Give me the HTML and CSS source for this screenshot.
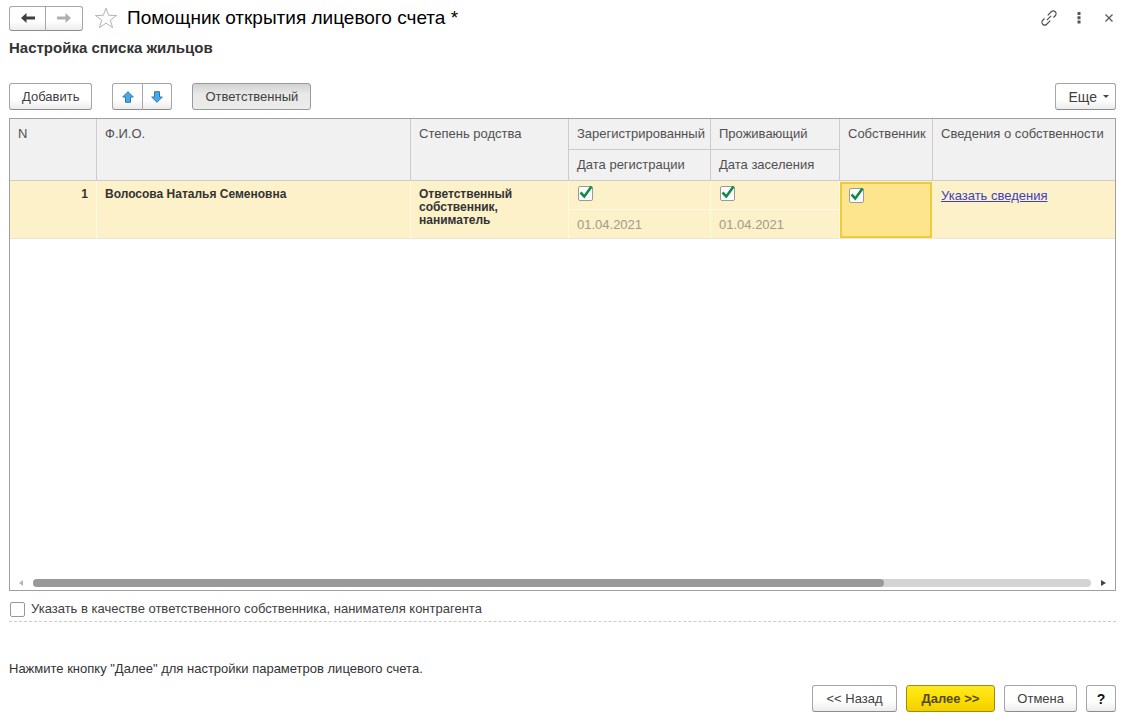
FILE: index.html
```html
<!DOCTYPE html>
<html lang="ru">
<head>
<meta charset="utf-8">
<meta name="viewport" content="width=device-width, initial-scale=1">
<title>Помощник открытия лицевого счета</title>
<link rel="stylesheet" href="styles.css">
</head>
<body>
<svg class="sprite" aria-hidden="true">
  <symbol id="tick" viewBox="0 0 17 17"><path d="M3.500 7.500 7.300 11.500 14.500 1.500" fill="none" stroke="#128a4c" stroke-width="2.600"/></symbol>
</svg>
<main class="window">
  <header class="titlebar">
    <div class="group">
      <button class="btn nav" type="button" aria-label="Назад по истории">
        <svg width="14" height="10" viewBox="0 0 14 10"><path d="M5.500 0 0 5l5.500 5V6.500H14v-3H5.500z" fill="#404040"/></svg>
      </button>
      <button class="btn nav" type="button" aria-label="Вперед по истории">
        <svg width="14" height="10" viewBox="0 0 14 10"><path d="M8.500 0 14 5l-5.500 5V6.500H0v-3h8.500z" fill="#b0b0b0"/></svg>
      </button>
    </div>
    <button class="icon star" type="button" aria-label="Добавить в избранное">
      <svg width="24" height="22" viewBox="0 0 24 22"><path d="M12 1.200 14.700 8.300 22.600 8.500 16.300 13.100 18.600 20.600 12 16.200 5.400 20.600 7.700 13.100 1.400 8.500 9.300 8.300z" fill="#fff" stroke="#b4b4b4"/></svg>
    </button>
    <h1 class="title">Помощник открытия лицевого счета *</h1>
    <div class="tools">
      <button class="icon" type="button" aria-label="Получить ссылку">
        <svg width="18" height="18" viewBox="-9 -9 18 18" fill="none" stroke="#505050" stroke-width="1.200"><path transform="rotate(-45)" d="M1-2.800H6a2.800 2.800 0 0 1 0 5.600H3.500M-1 2.800H-6a2.800 2.800 0 0 1 0-5.600H-3.500M-3 0H3"/></svg>
      </button>
      <button class="icon" type="button" aria-label="Меню">
        <svg width="4" height="12" viewBox="0 0 4 12" fill="#555"><path d="M.5 0h3v3h-3zM.5 4.200h3v3h-3zM.5 8.400h3v3h-3z"/></svg>
      </button>
      <button class="icon" type="button" aria-label="Закрыть">
        <svg width="8" height="8" viewBox="0 0 8 8"><path d="M.5.500l7 7M7.500.500l-7 7" stroke="#555" stroke-width="1.200"/></svg>
      </button>
    </div>
  </header>
  <h2 class="subtitle">Настройка списка жильцов</h2>

  <div class="toolbar">
    <button class="btn" type="button">Добавить</button>
    <div class="group">
      <button class="btn move" type="button" aria-label="Переместить вверх">
        <svg width="12" height="12" viewBox="0 0 12 12"><path d="M6 .7 11.300 6H8.500v5.300h-5V6H.7z" fill="#4aa8e8" stroke="#2878b0"/></svg>
      </button>
      <button class="btn move" type="button" aria-label="Переместить вниз">
        <svg width="12" height="12" viewBox="0 0 12 12"><path d="M6 11.300.7 6h2.800V.7h5V6h2.800z" fill="#4aa8e8" stroke="#2878b0"/></svg>
      </button>
    </div>
    <button class="btn pressed" type="button" aria-pressed="true">Ответственный</button>
    <button class="btn more" type="button">Еще
      <svg width="6" height="3" viewBox="0 0 6 3"><path d="M0 0h6L3 3z" fill="#444"/></svg>
    </button>
  </div>

  <section class="frame">
    <table class="grid">
      <colgroup>
        <col class="c-num"><col><col class="c-kin"><col class="c-reg"><col class="c-live"><col class="c-own"><col class="c-info">
      </colgroup>
      <thead>
        <tr>
          <th rowspan="2">N</th>
          <th rowspan="2">Ф.И.О.</th>
          <th rowspan="2">Степень родства</th>
          <th>Зарегистрированный</th>
          <th>Проживающий</th>
          <th rowspan="2">Собственник</th>
          <th class="last" rowspan="2">Сведения о собственности</th>
        </tr>
        <tr>
          <th>Дата регистрации</th>
          <th>Дата заселения</th>
        </tr>
      </thead>
      <tbody>
        <tr>
          <td class="strong num" rowspan="2">1</td>
          <td class="strong" rowspan="2">Волосова Наталья Семеновна</td>
          <td class="strong" rowspan="2">Ответственный собственник, наниматель</td>
          <td class="flag"><span class="check"><input type="checkbox" checked aria-label="Зарегистрированный"><svg><use href="#tick"/></svg></span></td>
          <td class="flag"><span class="check"><input type="checkbox" checked aria-label="Проживающий"><svg><use href="#tick"/></svg></span></td>
          <td class="flag current" rowspan="2"><span class="check"><input type="checkbox" checked aria-label="Собственник"><svg><use href="#tick"/></svg></span></td>
          <td class="last" rowspan="2"><a href="#">Указать сведения</a></td>
        </tr>
        <tr>
          <td class="date">01.04.2021</td>
          <td class="date">01.04.2021</td>
        </tr>
      </tbody>
    </table>
    <div class="scroll">
      <svg width="4" height="6" viewBox="0 0 4 6"><path d="M4 0v6L0 3z" fill="#b8b8b8"/></svg>
      <div class="track"><div class="thumb"></div></div>
      <svg width="5" height="6" viewBox="0 0 5 6"><path d="M0 0v6l5-3z" fill="#444"/></svg>
    </div>
  </section>

  <label class="option"><input type="checkbox">Указать в качестве ответственного собственника, нанимателя контрагента</label>
  <p class="hint">Нажмите кнопку "Далее" для настройки параметров лицевого счета.</p>

  <footer class="actions">
    <button class="btn back" type="button">&lt;&lt; Назад</button>
    <button class="btn primary" type="button">Далее &gt;&gt;</button>
    <button class="btn" type="button">Отмена</button>
    <button class="btn help" type="button" aria-label="Справка">?</button>
  </footer>
</main>
</body>
</html>
```
FILE: styles.css
```css
* { box-sizing: border-box; }
body {
  margin: 0;
  background: #fff;
  color: #404040;
  font: 13px/16px "Liberation Sans", Arial, sans-serif;
}
.sprite { display: none; }
.window {
  display: flex;
  flex-direction: column;
  min-height: 100vh;
  padding: 5px 16px 10px 9px;
}
.titlebar, .toolbar, .group, .tools, .actions { display: flex; align-items: center; }
.btn {
  display: flex;
  align-items: center;
  justify-content: center;
  height: 27px;
  padding: 0 12px;
  border: 1px solid #a6a6a6;
  border-bottom-color: #8c8c8c;
  border-radius: 3px;
  background: linear-gradient(#fff 60%, #ececec);
  color: #404040;
  font: inherit;
  white-space: nowrap;
}
.group .btn:first-child { border-radius: 3px 0 0 3px; }
.group .btn:last-child { border-left: 0; border-radius: 0 3px 3px 0; }
.nav { width: 37px; height: 25px; padding: 0; }
.move { width: 29px; padding: 0; }
.move:first-child { width: 31px; }
.icon {
  display: flex;
  align-items: center;
  justify-content: center;
  width: 30px;
  height: 26px;
  padding: 0;
  border: 0;
  background: none;
}
.star { width: 24px; margin: 0 9px 0 11px; }
.title { margin: 0; color: #000; font-size: 19px; font-weight: 400; line-height: 26px; }
.tools { margin-left: auto; margin-right: -8px; }
.subtitle { margin: 9px 0 27px; color: #333; font-size: 15px; line-height: 16px; }
.toolbar { gap: 20px; margin-bottom: 8px; }
.pressed {
  border-color: #999;
  background: linear-gradient(#d2d2d2, #e8e8e8 40%, #ececec);
}
.more { gap: 6px; margin-left: auto; padding: 0 6px 0 13px; font-size: 14px; }

.frame {
  display: flex;
  flex: 1;
  flex-direction: column;
  justify-content: space-between;
  border: 1px solid #a0a0a0;
}
.grid { width: 100%; border-spacing: 0; table-layout: fixed; }
.c-num { width: 87px; }
.c-kin { width: 158px; }
.c-reg { width: 142px; }
.c-live { width: 129px; }
.c-own { width: 93px; }
.c-info { width: 182px; }
.grid th {
  height: 31px;
  padding: 7px 0 7px 8px;
  border-right: 1px solid #cbcbcb;
  border-bottom: 1px solid #cbcbcb;
  background: #f1f1f1;
  color: #505050;
  font-weight: 400;
  text-align: left;
  vertical-align: top;
  white-space: nowrap;
}
.grid td {
  height: 29px;
  padding: 7px 8px 0;
  border-right: 1px solid #fff8e2;
  border-bottom: 1px solid #fff8e2;
  background: #fcf1c8;
  vertical-align: top;
}
.grid td[rowspan], .grid .date { border-bottom-color: #ece6d0; }
.grid .last { border-right: 0; }
.grid .strong { color: #333; font-size: 12px; font-weight: 700; line-height: 13px; }
.grid .num { text-align: right; }
.grid .flag { padding-top: 4px; }
.grid .date { color: #a29c88; }
.grid .current { padding-top: 5px; border: 1px solid #fff3cc; border-width: 1px 1px 1px 0; background: #fde58e; box-shadow: inset 0 0 0 2px #efca3a; }
.grid a { color: #4040c0; }
.check { display: grid; width: 18px; height: 18px; }
.check input, .check svg { grid-area: 1 / 1; }
.check svg { width: 17px; height: 17px; pointer-events: none; }
input[type="checkbox"] {
  width: 15px;
  height: 15px;
  margin: 0;
  border: 1px solid #999;
  border-radius: 2px;
  background: #fff;
  appearance: none;
}
.check input[type="checkbox"] { margin: 1px; }

.scroll { display: flex; align-items: center; gap: 10px; padding: 0 9px 3px; }
.track { flex: 1; height: 8px; border-radius: 4px; background: #d4d4d4; }
.thumb { width: 80.400%; height: 8px; border-radius: 4px; background: #999; }

.option {
  display: flex;
  align-items: center;
  gap: 6px;
  padding: 10px 0 4px 1px;
  border-bottom: 1px dashed #ccc;
}
.hint { margin: 39px 0 8px; color: #333; }
.actions { justify-content: flex-end; gap: 9px; }
.back { padding: 0 13px; }
.primary {
  padding: 0 15px;
  border-color: #a08a10;
  background: linear-gradient(#ffea20, #fbdc00 60%, #efcf00);
  color: #54490a;
  font-weight: 700;
}
.help { width: 30px; padding: 0; color: #111; font-size: 14px; font-weight: 700; }
```
